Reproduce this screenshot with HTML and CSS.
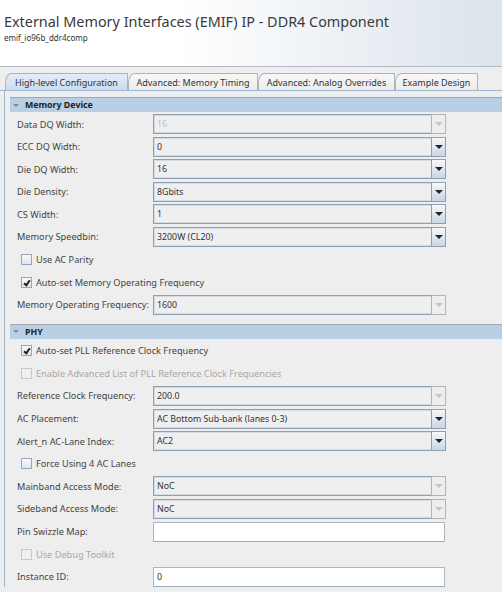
FILE: index.html
```html
<!DOCTYPE html>
<html lang="en">
<head>
  <meta charset="UTF-8" />
  <title>EMIF DDR4 Component</title>
  <link rel="stylesheet" href="styles.css">
</head>
<body>
  <div class="header">
    <div class="title">External Memory Interfaces (EMIF) IP - DDR4 Component</div>
    <div class="subtitle">emif_io96b_ddr4comp</div>
  </div>

  <div class="tabs">
    <div class="tab active">High-level Configuration</div>
    <div class="tab">Advanced: Memory Timing</div>
    <div class="tab">Advanced: Analog Overrides</div>
    <div class="tab">Example Design</div>
  </div>

  <div class="panel">
    <div class="section">
      <div class="section-bar"><span class="arrow"></span>Memory Device</div>
      <div class="rows">
        <div class="row"><span class="lbl">Data DQ Width:</span><div class="combo disabled"><span class="val faded">16</span><span class="btn"></span></div></div>
        <div class="row"><span class="lbl">ECC DQ Width:</span><div class="combo"><span class="val">0</span><span class="btn"></span></div></div>
        <div class="row"><span class="lbl">Die DQ Width:</span><div class="combo"><span class="val">16</span><span class="btn"></span></div></div>
        <div class="row"><span class="lbl">Die Density:</span><div class="combo"><span class="val">8Gbits</span><span class="btn"></span></div></div>
        <div class="row"><span class="lbl">CS Width:</span><div class="combo"><span class="val">1</span><span class="btn"></span></div></div>
        <div class="row"><span class="lbl">Memory Speedbin:</span><div class="combo"><span class="val">3200W (CL20)</span><span class="btn"></span></div></div>
        <div class="row check"><span class="box"></span>Use AC Parity</div>
        <div class="row check"><span class="box checked"></span>Auto-set Memory Operating Frequency</div>
        <div class="row"><span class="lbl">Memory Operating Frequency:</span><div class="combo disabled"><span class="val">1600</span><span class="btn"></span></div></div>
      </div>
    </div>

    <div class="section">
      <div class="section-bar"><span class="arrow"></span>PHY</div>
      <div class="rows">
        <div class="row check"><span class="box checked"></span>Auto-set PLL Reference Clock Frequency</div>
        <div class="row check off"><span class="box"></span>Enable Advanced List of PLL Reference Clock Frequencies</div>
        <div class="row"><span class="lbl">Reference Clock Frequency:</span><div class="combo disabled"><span class="val">200.0</span><span class="btn"></span></div></div>
        <div class="row"><span class="lbl">AC Placement:</span><div class="combo"><span class="val">AC Bottom Sub-bank (lanes 0-3)</span><span class="btn"></span></div></div>
        <div class="row"><span class="lbl">Alert_n AC-Lane Index:</span><div class="combo"><span class="val">AC2</span><span class="btn"></span></div></div>
        <div class="row check"><span class="box"></span>Force Using 4 AC Lanes</div>
        <div class="row"><span class="lbl">Mainband Access Mode:</span><div class="combo disabled"><span class="val">NoC</span><span class="btn"></span></div></div>
        <div class="row"><span class="lbl">Sideband Access Mode:</span><div class="combo disabled"><span class="val">NoC</span><span class="btn"></span></div></div>
        <div class="row"><span class="lbl">Pin Swizzle Map:</span><div class="text-field"></div></div>
        <div class="row check off"><span class="box"></span>Use Debug Toolkit</div>
        <div class="row"><span class="lbl">Instance ID:</span><div class="text-field"><span class="val">0</span></div></div>
      </div>
    </div>
  </div>
</body>
</html>
```

FILE: styles.css
```css
body {
  margin: 0;
  font-family: "Noto Sans", "Open Sans", sans-serif;
  background: #eeeeee;
  color: #333;
  overflow: hidden;
}

.header {
  height: 67px;
  padding-left: 4px;
  box-sizing: border-box;
  padding-top: 12px;
  background: linear-gradient(to right, #ffffff 35%, #dbe3ec);
  border-bottom: 1px solid #b3bcc6;
}

.title {
  font-size: 14.4px;
  line-height: 20px;
  color: #3a3a3a;
}

.subtitle {
  font-size: 8px;
  line-height: 11px;
  color: #333;
}

.tabs {
  display: flex;
  padding: 6px 0 0 5px;
  border-bottom: 1px solid #9db6d2;
  background: #eeeeee;
}

.tab {
  height: 17px;
  line-height: 17px;
  font-size: 9px;
  color: #333;
  box-sizing: border-box;
  border: 1px solid #a9b4c0;
  border-bottom: none;
  border-top-left-radius: 6px 10px;
  background: linear-gradient(#f7f7f7, #ececec);
  text-align: center;
}

.tab:nth-child(1) { width: 123px; }
.tab:nth-child(2) { width: 130px; }
.tab:nth-child(3) { width: 137px; }
.tab:nth-child(4) { width: 83px; }

.tab.active {
  background: linear-gradient(#e4edf7, #cbdcee);
  border-color: #9db6d2;
}

.panel {
  margin-left: 4px;
  border-left: 1px solid #a3b8cf;
  padding: 6px 0 0 5px;
}

.section {
  margin-bottom: 9px;
}

.section-bar {
  height: 15px;
  box-sizing: border-box;
  border-top: 1px solid #a0a7ae;
  background: #b9cfe6;
  font-size: 8.8px;
  font-weight: bold;
  color: #222;
  line-height: 14px;
  display: flex;
  align-items: center;
}

.arrow {
  width: 0;
  height: 0;
  border-left: 3px solid transparent;
  border-right: 3px solid transparent;
  border-top: 3px solid #7d8a98;
  margin: 0 6px 0 3px;
}

.rows {
  display: flex;
  flex-direction: column;
  gap: 2.6px;
  padding-top: 2px;
}

.row {
  display: flex;
  align-items: center;
  height: 20px;
  font-size: 9.2px;
  color: #444;
}

.lbl {
  width: 143px;
  padding-left: 7px;
  box-sizing: border-box;
  flex-shrink: 0;
}

.combo,
.text-field {
  width: 293px;
  height: 20px;
  box-sizing: border-box;
  display: flex;
  align-items: center;
  border: 1px solid #8d9fb4;
  box-shadow: inset 0 0 0 1px #d3dbe4;
  background: #efefef;
}

.text-field {
  width: 292px;
  background: #ffffff;
  border-color: #aeb6bf;
  border-bottom-color: #9aabbe;
  box-shadow: none;
}

.val {
  flex: 1;
  padding-left: 3px;
  font-size: 8.8px;
  color: #333;
  white-space: nowrap;
}

.val.faded {
  color: #b3c2d3;
}

.btn {
  width: 15px;
  height: 20px;
  margin: -1px -1px -1px 0;
  box-sizing: border-box;
  border: 1px solid #8d9fb4;
  background: linear-gradient(#f6f8fb, #c9d6e4);
  display: flex;
  align-items: center;
  justify-content: center;
}

.btn::after {
  content: "";
  width: 0;
  height: 0;
  border-left: 4px solid transparent;
  border-right: 4px solid transparent;
  border-top: 4px solid #262626;
}

.combo.disabled .btn {
  background: #eeeeee;
  border-color: #b3b3b3;
}

.combo.disabled .btn::after {
  border-top-color: #b3c7dd;
}

.check {
  padding-left: 11px;
}

.check.off {
  color: #a8a8a8;
}

.box {
  width: 11px;
  height: 11px;
  box-sizing: border-box;
  border: 1px solid #95a6ba;
  background: linear-gradient(#f8fafc, #dfe6ee);
  margin-right: 4px;
  position: relative;
}

.check.off .box {
  border-color: #c4c9ce;
  background: #f0f0f0;
}

.box.checked::after {
  content: "";
  position: absolute;
  left: 3px;
  top: 1px;
  width: 2px;
  height: 5px;
  border-right: 2px solid #222;
  border-bottom: 2px solid #222;
  transform: rotate(35deg);
}
```
